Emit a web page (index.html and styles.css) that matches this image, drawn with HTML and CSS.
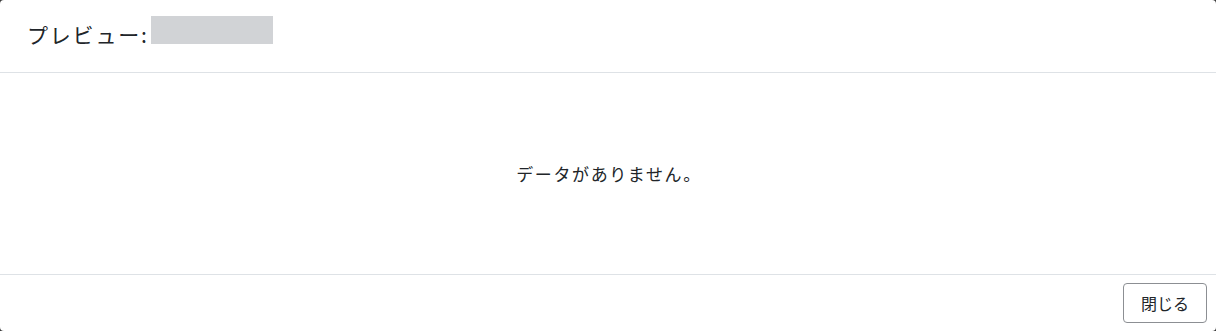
FILE: index.html
```html
<!DOCTYPE html>
<html lang="ja">
<head>
<meta charset="utf-8">
<link rel="stylesheet" href="styles.css">
</head>
<body>
<div class="modal">
  <header class="modal-header">
    <h2 class="modal-title">プレビュー: <span class="name-placeholder"></span></h2>
  </header>
  <main class="modal-body">
    <p class="empty">データがありません。</p>
  </main>
  <footer class="modal-footer">
    <button class="btn-close" type="button">閉じる</button>
  </footer>
</div>
</body>
</html>
```

FILE: styles.css
```css
html, body {
  margin: 0;
  padding: 0;
  height: 100%;
}
body {
  background: #3a3a3a;
  font-family: "Noto Sans CJK JP", "Noto Sans", sans-serif;
  color: #212529;
}
.modal {
  box-sizing: border-box;
  height: 331px;
  background: #ffffff;
  border-radius: 4px;
  display: flex;
  flex-direction: column;
}
.modal-header {
  height: 73px;
  box-sizing: border-box;
  border-bottom: 1px solid #dee2e6;
  padding: 19px 27px 0;
}
.modal-title {
  margin: 0;
  font-size: 21px;
  font-weight: 400;
  line-height: 30px;
  letter-spacing: 1.8px;
  display: flex;
  align-items: flex-start;
  gap: 2px;
}
.name-placeholder {
  display: block;
  width: 122px;
  height: 28px;
  background: #d1d3d6;
  margin-top: -3px;
}
.modal-body {
  flex: 1;
  display: flex;
  align-items: center;
  justify-content: center;
}
.empty {
  margin: 0;
  font-size: 17px;
  line-height: 1.5;
  letter-spacing: 1.6px;
  padding-left: 2px;
}
.modal-footer {
  height: 57px;
  box-sizing: border-box;
  border-top: 1px solid #dee2e6;
  display: flex;
  align-items: center;
  justify-content: flex-end;
  padding: 0 9px;
}
.btn-close {
  font-family: inherit;
  font-size: 16px;
  line-height: 1.5;
  color: #212529;
  background: #ffffff;
  border: 1px solid #8c8f93;
  border-radius: 4px;
  padding: 6px 17px;
  height: 40px;
}
```
